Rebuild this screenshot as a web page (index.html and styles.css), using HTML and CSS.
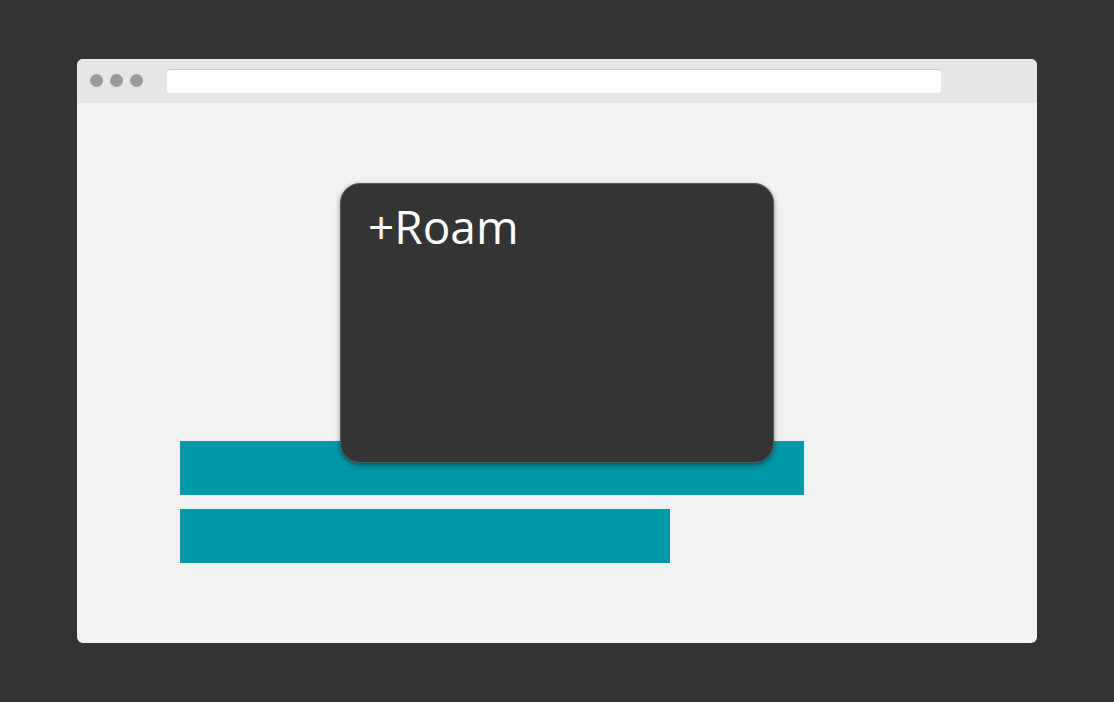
FILE: index.html
```html
<!DOCTYPE html>
<html>
<head>
<meta charset="utf-8">
<link rel="stylesheet" href="styles.css">
</head>
<body>
<div class="stage">
  <div class="window">
    <div class="titlebar">
      <div class="dots"><span class="dot"></span><span class="dot"></span><span class="dot"></span></div>
      <div class="address"></div>
    </div>
    <div class="content">
      <div class="bars">
        <div class="bar bar-long"></div>
        <div class="bar bar-short"></div>
      </div>
      <div class="card"><div class="card-title">+Roam</div></div>
    </div>
  </div>
</div>
</body>
</html>
```
FILE: styles.css
```css
html, body {
  margin: 0;
  padding: 0;
  background: #333333;
  width: 1114px;
  height: 702px;
  overflow: hidden;
}
.stage {
  padding: 59px 0 0 77px;
}
.window {
  width: 960px;
  height: 584px;
  border-radius: 6px;
  overflow: hidden;
  background: #f2f2f2;
  display: flex;
  flex-direction: column;
}
.titlebar {
  height: 44px;
  background: #e6e6e6;
  display: flex;
  align-items: flex-start;
  flex-shrink: 0;
}
.dots {
  display: flex;
  gap: 7px;
  padding: 15px 0 0 13px;
  width: 77px;
  box-sizing: border-box;
}
.dot {
  width: 13px;
  height: 13px;
  border-radius: 50%;
  background: #999999;
}
.address {
  margin: 10px 0 0 13px;
  width: 774px;
  height: 24px;
  box-sizing: border-box;
  background: #ffffff;
  border-radius: 4px;
  border-top: 1px solid #c8c8c8;
}
.content {
  position: relative;
  flex: 1;
}
.bars {
  display: flex;
  flex-direction: column;
  gap: 14px;
  padding: 338px 0 0 103px;
}
.bar {
  height: 54px;
  background: #0097a7;
}
.bar-long { width: 624px; }
.bar-short { width: 490px; }
.card {
  position: absolute;
  left: 263px;
  top: 80px;
  width: 434px;
  height: 280px;
  box-sizing: border-box;
  background: #343434;
  border: 1px solid #5a5a5a;
  border-radius: 20px;
  box-shadow: 0 2px 5px rgba(0, 0, 0, 0.45);
  padding: 11px 0 0 27px;
}
.card-title {
  font-family: "Open Sans", "Noto Sans", sans-serif;
  font-size: 46px;
  line-height: 62px;
  color: #ffffff;
}
```
